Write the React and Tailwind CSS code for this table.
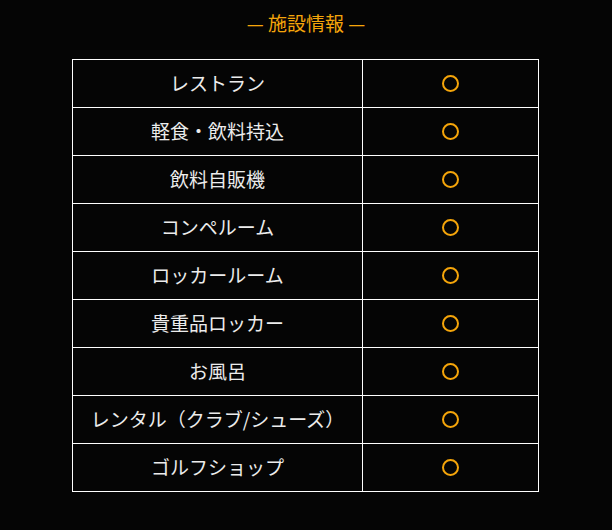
const items = [
  'レストラン',
  '軽食・飲料持込',
  '飲料自販機',
  'コンペルーム',
  'ロッカールーム',
  '貴重品ロッカー',
  'お風呂',
  'レンタル（クラブ/シューズ）',
  'ゴルフショップ',
];

export default function App() {
  return (
    <div
      className="w-[612px] h-[530px] bg-[#050505] text-[#ececec] pt-[10px]"
      style={{ fontFamily: '"Noto Sans CJK JP", "Noto Sans", sans-serif' }}
    >
      <h2 className="text-center text-[19px] leading-[26px] font-normal text-[#f5a50a]">— 施設情報 —</h2>
      <table className="ml-[72px] mt-[23px] w-[467px] border-collapse">
        <tbody>
          {items.map((name) => (
            <tr key={name} className="h-[48px]">
              <td className="w-[290px] border border-white text-center text-[19px] font-normal p-0">{name}</td>
              <td className="border border-white p-0">
                <div className="mx-auto w-[17px] h-[17px] rounded-full border-2 border-[#f5a50a]" />
              </td>
            </tr>
          ))}
        </tbody>
      </table>
    </div>
  );
}
